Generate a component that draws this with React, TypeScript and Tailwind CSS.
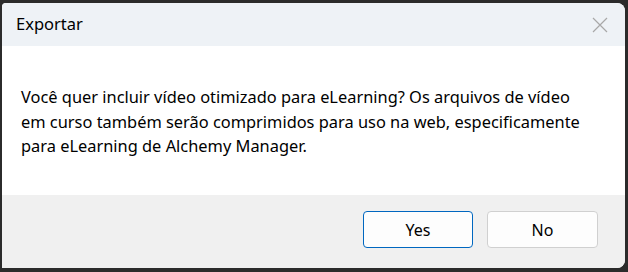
import React from "react";

export default function App() {
  const font = { fontFamily: '"Noto Sans", "Open Sans", sans-serif' };
  return (
    <div className="w-[628px] h-[272px] bg-[#2b2b2b] pl-[2px] pt-[3px] pr-[3px] pb-[4px]" style={font}>
      <div className="h-full flex flex-col bg-white rounded-tl-[4px] rounded-tr-[8px] rounded-br-[8px] overflow-hidden">
        <div className="h-[43px] shrink-0 bg-[#eef2f6] flex items-center justify-between pl-[14px] pr-[17px]">
          <span className="text-[16.5px] text-black leading-none">Exportar</span>
          <svg width="16" height="16" viewBox="0 0 16 16" className="shrink-0">
            <path d="M1 1 L15 15 M15 1 L1 15" stroke="#a8a8a8" strokeWidth="1.2" fill="none" />
          </svg>
        </div>
        <div className="flex-1 pl-[19px] pt-[39px] text-[16.4px] leading-[24.5px] text-black">
          <p>Você quer incluir vídeo otimizado para eLearning? Os arquivos de vídeo</p>
          <p>em curso também serão comprimidos para uso na web, especificamente</p>
          <p>para eLearning de Alchemy Manager.</p>
        </div>
        <div className="h-[73px] shrink-0 bg-[#f0f0f0] flex justify-end items-start pt-[16px] pr-[27px] gap-[14px]">
          <button className="w-[110px] h-[37px] rounded-[4px] border border-[#0067c0] bg-[#fdfdfd] text-[16px] text-black">Yes</button>
          <button className="w-[111px] h-[37px] rounded-[4px] border border-[#d0d0d0] bg-[#fdfdfd] text-[16px] text-black">No</button>
        </div>
      </div>
    </div>
  );
}
